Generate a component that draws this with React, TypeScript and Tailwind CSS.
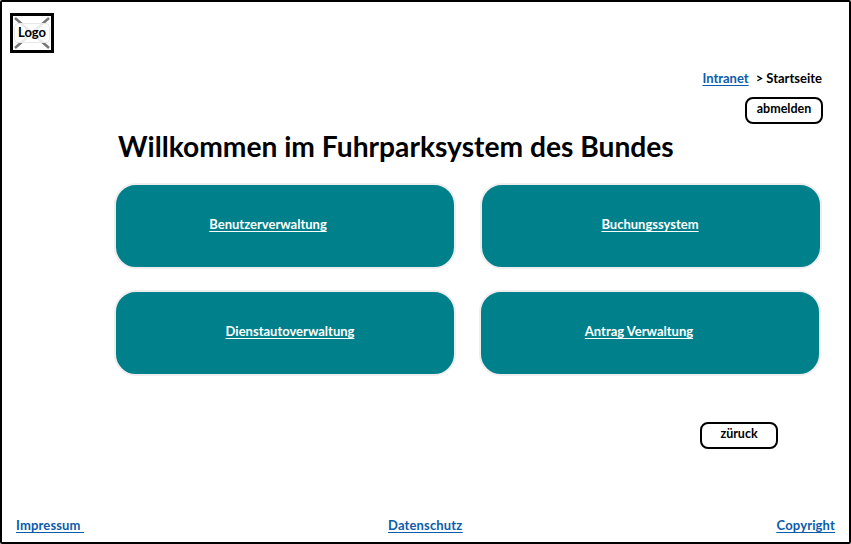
const FONT = "font-['Lato',sans-serif]";

function NavCard({ label, textClass = '' }: { label: string; textClass?: string }) {
  return (
    <div className="w-[342px] h-[86px] pb-[3px] flex items-center justify-center bg-[#00808b] border-2 border-[#eeeeee] rounded-[22px]">
      <a className={`text-[13px] font-bold leading-none text-white underline underline-offset-2 ${textClass}`}>{label}</a>
    </div>
  );
}

function SketchButton({ label, className }: { label: string; className: string }) {
  return (
    <button className={`h-[27px] pb-[2px] border-2 border-black rounded-[8px] bg-white text-[12.5px] font-bold leading-none text-black ${className}`}>
      {label}
    </button>
  );
}

export default function App() {
  return (
    <div className={`${FONT} w-[851px] h-[544px] bg-white border-2 border-black rounded-[2px] flex flex-col`}>
      {/* Logo */}
      <div className="pl-2 pt-[11px]">
        <div className="relative w-[44px] h-[40px] border-[3px] border-black bg-white flex items-center justify-center">
          <svg className="absolute inset-0 w-full h-full" viewBox="0 0 38 34">
            <path d="M2 2L36 32M36 2L2 32" stroke="#777777" strokeWidth="2.5" />
          </svg>
          <span className="relative z-10 w-[36px] h-[20px] bg-white/85 border border-[#e8e8e8] rounded-[4px] text-center text-[13px] leading-[17px] font-bold text-black">Logo</span>
        </div>
      </div>

      {/* Breadcrumb */}
      <div className="mt-[16px] pr-[27px] flex justify-end items-center gap-[7px] text-[13px] leading-[18px] font-bold">
        <a className="text-[#0b5cab] underline underline-offset-2">Intranet</a>
        <span className="text-black">&gt;&nbsp;Startseite</span>
      </div>

      <div className="mt-[10px] pr-[26px] flex justify-end">
        <SketchButton label="abmelden" className="w-[78px]" />
      </div>

      <h1 className="mt-[4px] ml-[116px] text-[28.2px] leading-[36px] font-bold text-black">
        Willkommen im Fuhrparksystem des Bundes
      </h1>

      {/* Navigation cards */}
      <div className="mt-[19px] ml-[112px] flex flex-col gap-[21px]">
        <div className="flex gap-[24px]">
          <NavCard label="Benutzerverwaltung" textClass="mr-[34px]" />
          <NavCard label="Buchungssystem" textClass="mr-[2px]" />
        </div>
        <div className="flex gap-[23px]">
          <NavCard label="Dienstautoverwaltung" textClass="ml-[10px]" />
          <NavCard label="Antrag Verwaltung" textClass="mr-[22px]" />
        </div>
      </div>

      <div className="mt-[44px] ml-[698px]">
        <SketchButton label="züruck" className="w-[78px]" />
      </div>

      {/* Footer */}
      <div className="mt-auto mb-[8px] px-[14px] flex justify-between text-[13px] tracking-[0.15px] leading-[18px] font-bold text-[#0b5cab] underline underline-offset-2">
        <a>Impressum&nbsp;</a>
        <a className="mr-[10px]">Datenschutz</a>
        <a>Copyright</a>
      </div>
    </div>
  );
}
